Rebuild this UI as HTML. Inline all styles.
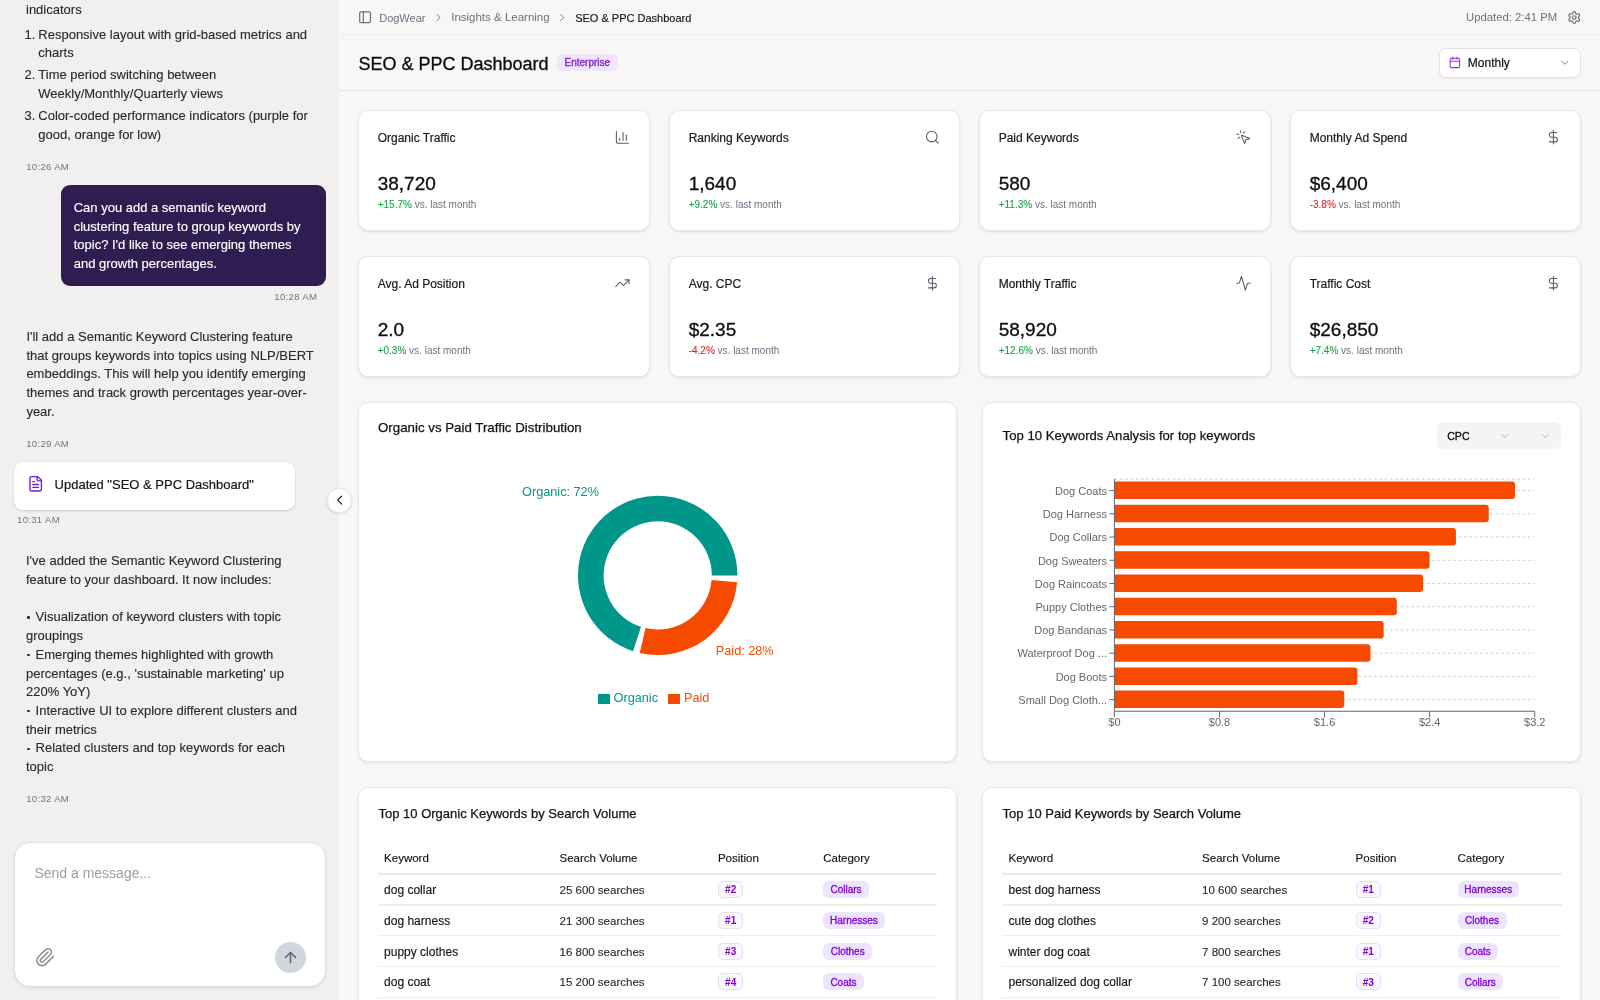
<!DOCTYPE html>
<html><head><meta charset="utf-8"><title>SEO &amp; PPC Dashboard</title>
<style>
html,body{margin:0;padding:0;width:1600px;height:1000px;overflow:hidden;background:#f8f7f5;}
body{position:relative;font-family:"Liberation Sans", sans-serif;-webkit-font-smoothing:antialiased;}
#root{position:absolute;left:0;top:0;width:1600px;height:1000px;will-change:transform;}
</style></head><body><div id="root">
<div style="position:absolute;left:0.00px;top:0.00px;width:339.20px;height:1000.00px;background:#f1f0ee;"></div>
<div style="position:absolute;top:2.75px;font-size:13px;line-height:13px;color:#2a2a2a;white-space:nowrap;-webkit-text-stroke:0.12px #2a2a2a;left:26.00px;">indicators</div>
<div style="position:absolute;top:27.75px;font-size:13px;line-height:13px;color:#2a2a2a;white-space:nowrap;-webkit-text-stroke:0.12px #2a2a2a;left:24.50px;">1.</div>
<div style="position:absolute;top:27.75px;font-size:13px;line-height:13px;color:#2a2a2a;white-space:nowrap;-webkit-text-stroke:0.12px #2a2a2a;left:38.30px;">Responsive layout with grid-based metrics and</div>
<div style="position:absolute;top:46.47px;font-size:13px;line-height:13px;color:#2a2a2a;white-space:nowrap;-webkit-text-stroke:0.12px #2a2a2a;left:38.30px;">charts</div>
<div style="position:absolute;top:68.40px;font-size:13px;line-height:13px;color:#2a2a2a;white-space:nowrap;-webkit-text-stroke:0.12px #2a2a2a;left:24.50px;">2.</div>
<div style="position:absolute;top:68.40px;font-size:13px;line-height:13px;color:#2a2a2a;white-space:nowrap;-webkit-text-stroke:0.12px #2a2a2a;left:38.30px;">Time period switching between</div>
<div style="position:absolute;top:87.12px;font-size:13px;line-height:13px;color:#2a2a2a;white-space:nowrap;-webkit-text-stroke:0.12px #2a2a2a;left:38.30px;">Weekly/Monthly/Quarterly views</div>
<div style="position:absolute;top:109.20px;font-size:13px;line-height:13px;color:#2a2a2a;white-space:nowrap;-webkit-text-stroke:0.12px #2a2a2a;left:24.50px;">3.</div>
<div style="position:absolute;top:109.20px;font-size:13px;line-height:13px;color:#2a2a2a;white-space:nowrap;-webkit-text-stroke:0.12px #2a2a2a;left:38.30px;">Color-coded performance indicators (purple for</div>
<div style="position:absolute;top:127.92px;font-size:13px;line-height:13px;color:#2a2a2a;white-space:nowrap;-webkit-text-stroke:0.12px #2a2a2a;left:38.30px;">good, orange for low)</div>
<div style="position:absolute;top:162.07px;font-size:9.6px;line-height:9.6px;color:#74747f;white-space:nowrap;letter-spacing:0.3px;left:26.20px;">10:26 AM</div>
<div style="position:absolute;left:60.60px;top:185.00px;width:265.60px;height:101.40px;background:#2f1d52;border-radius:9px;"></div>
<div style="position:absolute;top:201.00px;font-size:13px;line-height:13px;color:#ffffff;white-space:nowrap;-webkit-text-stroke:0.15px #ffffff;left:73.70px;">Can you add a semantic keyword</div>
<div style="position:absolute;top:219.72px;font-size:13px;line-height:13px;color:#ffffff;white-space:nowrap;-webkit-text-stroke:0.15px #ffffff;left:73.70px;">clustering feature to group keywords by</div>
<div style="position:absolute;top:238.44px;font-size:13px;line-height:13px;color:#ffffff;white-space:nowrap;-webkit-text-stroke:0.15px #ffffff;left:73.70px;">topic? I'd like to see emerging themes</div>
<div style="position:absolute;top:257.16px;font-size:13px;line-height:13px;color:#ffffff;white-space:nowrap;-webkit-text-stroke:0.15px #ffffff;left:73.70px;">and growth percentages.</div>
<div style="position:absolute;top:291.87px;font-size:9.6px;line-height:9.6px;color:#74747f;white-space:nowrap;letter-spacing:0.3px;right:1282.80px;">10:28 AM</div>
<div style="position:absolute;top:329.80px;font-size:13px;line-height:13px;color:#2a2a2a;white-space:nowrap;-webkit-text-stroke:0.12px #2a2a2a;left:26.40px;">I'll add a Semantic Keyword Clustering feature</div>
<div style="position:absolute;top:348.52px;font-size:13px;line-height:13px;color:#2a2a2a;white-space:nowrap;-webkit-text-stroke:0.12px #2a2a2a;left:26.40px;">that groups keywords into topics using NLP/BERT</div>
<div style="position:absolute;top:367.24px;font-size:13px;line-height:13px;color:#2a2a2a;white-space:nowrap;-webkit-text-stroke:0.12px #2a2a2a;left:26.40px;">embeddings. This will help you identify emerging</div>
<div style="position:absolute;top:385.96px;font-size:13px;line-height:13px;color:#2a2a2a;white-space:nowrap;-webkit-text-stroke:0.12px #2a2a2a;left:26.40px;">themes and track growth percentages year-over-</div>
<div style="position:absolute;top:404.68px;font-size:13px;line-height:13px;color:#2a2a2a;white-space:nowrap;-webkit-text-stroke:0.12px #2a2a2a;left:26.40px;">year.</div>
<div style="position:absolute;top:438.67px;font-size:9.6px;line-height:9.6px;color:#74747f;white-space:nowrap;letter-spacing:0.3px;left:26.20px;">10:29 AM</div>
<div style="position:absolute;left:14.00px;top:462.30px;width:281.00px;height:47.50px;background:#fff;border-radius:9px;box-shadow:0 1px 3px rgba(0,0,0,0.10),0 1px 2px rgba(0,0,0,0.06);"></div>
<svg style="position:absolute;left:27px;top:475px;transform:translate(0.10px,0.20px);" width="17.2" height="17.2" viewBox="0 0 24 24" fill="none" stroke="#6a1fd8" stroke-width="1.9" stroke-linecap="round" stroke-linejoin="round"><path d="M15 2H6a2 2 0 0 0-2 2v16a2 2 0 0 0 2 2h12a2 2 0 0 0 2-2V7Z"/><path d="M14 2v4a2 2 0 0 0 2 2h4"/><path d="M10 9H8"/><path d="M16 13H8"/><path d="M16 17H8"/></svg>
<div style="position:absolute;top:478.40px;font-size:13px;line-height:13px;color:#161616;white-space:nowrap;-webkit-text-stroke:0.2px #161616;left:54.60px;">Updated "SEO &amp; PPC Dashboard"</div>
<div style="position:absolute;top:515.17px;font-size:9.6px;line-height:9.6px;color:#74747f;white-space:nowrap;letter-spacing:0.3px;left:17.00px;">10:31 AM</div>
<div style="position:absolute;top:554.20px;font-size:13px;line-height:13px;color:#2a2a2a;white-space:nowrap;-webkit-text-stroke:0.12px #2a2a2a;left:26.00px;">I've added the Semantic Keyword Clustering</div>
<div style="position:absolute;top:572.92px;font-size:13px;line-height:13px;color:#2a2a2a;white-space:nowrap;-webkit-text-stroke:0.12px #2a2a2a;left:26.00px;">feature to your dashboard. It now includes:</div>
<div style="position:absolute;left:27.20px;top:616.46px;width:2.40px;height:2.40px;background:#2a2a2a;border-radius:50%;"></div>
<div style="position:absolute;top:610.36px;font-size:13px;line-height:13px;color:#2a2a2a;white-space:nowrap;-webkit-text-stroke:0.12px #2a2a2a;left:35.60px;">Visualization of keyword clusters with topic</div>
<div style="position:absolute;top:629.08px;font-size:13px;line-height:13px;color:#2a2a2a;white-space:nowrap;-webkit-text-stroke:0.12px #2a2a2a;left:26.00px;">groupings</div>
<div style="position:absolute;left:27.20px;top:653.90px;width:2.40px;height:2.40px;background:#2a2a2a;border-radius:50%;"></div>
<div style="position:absolute;top:647.80px;font-size:13px;line-height:13px;color:#2a2a2a;white-space:nowrap;-webkit-text-stroke:0.12px #2a2a2a;left:35.60px;">Emerging themes highlighted with growth</div>
<div style="position:absolute;top:666.52px;font-size:13px;line-height:13px;color:#2a2a2a;white-space:nowrap;-webkit-text-stroke:0.12px #2a2a2a;left:26.00px;">percentages (e.g., 'sustainable marketing' up</div>
<div style="position:absolute;top:685.24px;font-size:13px;line-height:13px;color:#2a2a2a;white-space:nowrap;-webkit-text-stroke:0.12px #2a2a2a;left:26.00px;">220% YoY)</div>
<div style="position:absolute;left:27.20px;top:710.06px;width:2.40px;height:2.40px;background:#2a2a2a;border-radius:50%;"></div>
<div style="position:absolute;top:703.96px;font-size:13px;line-height:13px;color:#2a2a2a;white-space:nowrap;-webkit-text-stroke:0.12px #2a2a2a;left:35.60px;">Interactive UI to explore different clusters and</div>
<div style="position:absolute;top:722.68px;font-size:13px;line-height:13px;color:#2a2a2a;white-space:nowrap;-webkit-text-stroke:0.12px #2a2a2a;left:26.00px;">their metrics</div>
<div style="position:absolute;left:27.20px;top:747.50px;width:2.40px;height:2.40px;background:#2a2a2a;border-radius:50%;"></div>
<div style="position:absolute;top:741.40px;font-size:13px;line-height:13px;color:#2a2a2a;white-space:nowrap;-webkit-text-stroke:0.12px #2a2a2a;left:35.60px;">Related clusters and top keywords for each</div>
<div style="position:absolute;top:760.12px;font-size:13px;line-height:13px;color:#2a2a2a;white-space:nowrap;-webkit-text-stroke:0.12px #2a2a2a;left:26.00px;">topic</div>
<div style="position:absolute;top:793.67px;font-size:9.6px;line-height:9.6px;color:#74747f;white-space:nowrap;letter-spacing:0.3px;left:26.20px;">10:32 AM</div>
<div style="position:absolute;left:14.30px;top:841.80px;width:311.40px;height:145.40px;background:#fff;border-radius:16px;box-sizing:border-box;border:1px solid #e0e0e4;box-shadow:0 1px 3px rgba(0,0,0,0.09);"></div>
<div style="position:absolute;top:865.95px;font-size:14px;line-height:14px;color:#9aa0aa;white-space:nowrap;left:34.40px;">Send a message...</div>
<svg style="position:absolute;left:35px;top:946px;transform:translate(0.15px,0.95px);" width="20.4" height="20.4" viewBox="0 0 24 24" fill="none" stroke="#8a909b" stroke-width="1.8" stroke-linecap="round" stroke-linejoin="round"><path d="m21.44 11.05-9.19 9.19a6 6 0 0 1-8.49-8.49l8.57-8.57A4 4 0 1 1 18 8.84l-8.59 8.57a2 2 0 0 1-2.83-2.83l8.49-8.48"/></svg>
<div style="position:absolute;left:275.10px;top:942.10px;width:30.80px;height:30.80px;background:#d1d5dc;border-radius:50%;"></div>
<svg style="position:absolute;left:281px;top:948px;transform:translate(0.75px,0.75px);" width="17.5" height="17.5" viewBox="0 0 24 24" fill="none" stroke="#5b6270" stroke-width="2" stroke-linecap="round" stroke-linejoin="round"><path d="m5 12 7-7 7 7"/><path d="M12 19V5"/></svg>
<div style="position:absolute;left:339.20px;top:0.00px;width:1260.80px;height:1000.00px;background:#f8f7f5;"></div>
<div style="position:absolute;left:339.20px;top:34.00px;width:1260.80px;height:1.00px;background:#efeeeb;"></div>
<div style="position:absolute;left:339.20px;top:90.00px;width:1260.80px;height:1.00px;background:#e6e5e2;"></div>
<svg style="position:absolute;left:357px;top:10px;transform:translate(0.90px,0.05px);" width="14.4" height="14.4" viewBox="0 0 24 24" fill="none" stroke="#6f6f7f" stroke-width="2" stroke-linecap="round" stroke-linejoin="round"><rect width="18" height="18" x="3" y="3" rx="2"/><path d="M9 3v18"/></svg>
<div style="position:absolute;top:12.59px;font-size:11px;line-height:11px;color:#6f6f7f;white-space:nowrap;left:379.20px;">DogWear</div>
<svg style="position:absolute;left:432px;top:11px;transform:translate(0.50px,0.50px);" width="12" height="12" viewBox="0 0 24 24" fill="none" stroke="#77778a" stroke-width="2" stroke-linecap="round" stroke-linejoin="round"><path d="m9 18 6-6-6-6"/></svg>
<div style="position:absolute;top:12.17px;font-size:11.5px;line-height:11.5px;color:#6f6f7f;white-space:nowrap;left:451.20px;">Insights &amp; Learning</div>
<svg style="position:absolute;left:556px;top:11px;transform:translate(0.20px,0.50px);" width="12" height="12" viewBox="0 0 24 24" fill="none" stroke="#77778a" stroke-width="2" stroke-linecap="round" stroke-linejoin="round"><path d="m9 18 6-6-6-6"/></svg>
<div style="position:absolute;top:12.59px;font-size:11px;line-height:11px;color:#141414;white-space:nowrap;-webkit-text-stroke:0.15px #141414;left:575.20px;">SEO &amp; PPC Dashboard</div>
<div style="position:absolute;top:12.33px;font-size:11.3px;line-height:11.3px;color:#6f6f7f;white-space:nowrap;left:1466.10px;">Updated: 2:41 PM</div>
<svg style="position:absolute;left:1567px;top:10px;transform:translate(0.10px,0.40px);" width="14.3" height="14.3" viewBox="0 0 24 24" fill="none" stroke="#6f6f7f" stroke-width="2" stroke-linecap="round" stroke-linejoin="round"><path d="M12.22 2h-.44a2 2 0 0 0-2 2v.18a2 2 0 0 1-1 1.73l-.43.25a2 2 0 0 1-2 0l-.15-.08a2 2 0 0 0-2.73.73l-.22.38a2 2 0 0 0 .73 2.73l.15.1a2 2 0 0 1 1 1.72v.51a2 2 0 0 1-1 1.74l-.15.09a2 2 0 0 0-.73 2.73l.22.38a2 2 0 0 0 2.73.73l.15-.08a2 2 0 0 1 2 0l.43.25a2 2 0 0 1 1 1.73V20a2 2 0 0 0 2 2h.44a2 2 0 0 0 2-2v-.18a2 2 0 0 1 1-1.73l.43-.25a2 2 0 0 1 2 0l.15.08a2 2 0 0 0 2.73-.73l.22-.39a2 2 0 0 0-.73-2.73l-.15-.08a2 2 0 0 1-1-1.74v-.5a2 2 0 0 1 1-1.74l.15-.09a2 2 0 0 0 .73-2.73l-.22-.38a2 2 0 0 0-2.73-.73l-.15.08a2 2 0 0 1-2 0l-.43-.25a2 2 0 0 1-1-1.73V4a2 2 0 0 0-2-2z"/><circle cx="12" cy="12" r="3"/></svg>
<div style="position:absolute;top:54.76px;font-size:18px;line-height:18px;color:#0c0c0c;white-space:nowrap;-webkit-text-stroke:0.3px #0c0c0c;left:358.50px;">SEO &amp; PPC Dashboard</div>
<div style="position:absolute;left:557.30px;top:54.20px;width:61.10px;height:16.60px;background:#efe5fd;border-radius:5px;"></div>
<div style="position:absolute;top:58.44px;font-size:10px;line-height:10px;color:#7a1fc8;white-space:nowrap;-webkit-text-stroke:0.3px #7a1fc8;left:564.50px;">Enterprise</div>
<div style="position:absolute;left:1438.70px;top:48.20px;width:142.10px;height:29.60px;background:#fff;border-radius:7px;box-sizing:border-box;border:1px solid #e6e4e1;box-shadow:0 1px 2px rgba(0,0,0,0.06);"></div>
<svg style="position:absolute;left:1448px;top:56px;transform:translate(0.60px,0.10px);" width="12.6" height="12.6" viewBox="0 0 24 24" fill="none" stroke="#9a2cf0" stroke-width="2" stroke-linecap="round" stroke-linejoin="round"><path d="M8 2v4"/><path d="M16 2v4"/><rect width="18" height="18" x="3" y="4" rx="2"/><path d="M3 10h18"/></svg>
<div style="position:absolute;top:56.84px;font-size:12px;line-height:12px;color:#0c0c0c;white-space:nowrap;-webkit-text-stroke:0.15px #0c0c0c;left:1467.80px;">Monthly</div>
<svg style="position:absolute;left:1558px;top:56px;transform:translate(0.60px,0.50px);" width="12.5" height="12.5" viewBox="0 0 24 24" fill="none" stroke="#6b7280" stroke-width="1.8" stroke-linecap="round" stroke-linejoin="round"><path d="m6 9 6 6 6-6"/></svg>
<div style="position:absolute;left:358.00px;top:110.00px;width:292.00px;height:121.00px;background:#fff;border-radius:10px;box-sizing:border-box;border:1px solid #eae8e5;box-shadow:0 1px 3px rgba(0,0,0,0.07),0 1px 2px rgba(0,0,0,0.04);"></div>
<div style="position:absolute;top:131.74px;font-size:12px;line-height:12px;color:#1a1a1a;white-space:nowrap;-webkit-text-stroke:0.2px #1a1a1a;left:377.70px;">Organic Traffic</div>
<svg style="position:absolute;left:614px;top:129px;transform:translate(0.40px,0.20px);" width="16" height="16" viewBox="0 0 24 24" fill="none" stroke="#5c5c6c" stroke-width="1.6" stroke-linecap="round" stroke-linejoin="round"><path d="M3 3v16a2 2 0 0 0 2 2h16"/><path d="M18 17V9"/><path d="M13 17V5"/><path d="M8 17v-3"/></svg>
<div style="position:absolute;top:173.92px;font-size:19px;line-height:19px;color:#0c0c0c;white-space:nowrap;-webkit-text-stroke:0.3px #0c0c0c;left:377.70px;">38,720</div>
<div style="position:absolute;left:377.70px;top:200.23px;font-size:10px;line-height:10px;white-space:nowrap;color:#6b7280;"><span style="color:#16a34a;-webkit-text-stroke:0.1px #16a34a">+15.7%</span> vs. last month</div>
<div style="position:absolute;left:669.00px;top:110.00px;width:291.00px;height:121.00px;background:#fff;border-radius:10px;box-sizing:border-box;border:1px solid #eae8e5;box-shadow:0 1px 3px rgba(0,0,0,0.07),0 1px 2px rgba(0,0,0,0.04);"></div>
<div style="position:absolute;top:131.74px;font-size:12px;line-height:12px;color:#1a1a1a;white-space:nowrap;-webkit-text-stroke:0.2px #1a1a1a;left:688.70px;">Ranking Keywords</div>
<svg style="position:absolute;left:924px;top:129px;transform:translate(0.40px,0.20px);" width="16" height="16" viewBox="0 0 24 24" fill="none" stroke="#5c5c6c" stroke-width="1.6" stroke-linecap="round" stroke-linejoin="round"><circle cx="11" cy="11" r="8"/><path d="m21 21-4.3-4.3"/></svg>
<div style="position:absolute;top:173.92px;font-size:19px;line-height:19px;color:#0c0c0c;white-space:nowrap;-webkit-text-stroke:0.3px #0c0c0c;left:688.70px;">1,640</div>
<div style="position:absolute;left:688.70px;top:200.23px;font-size:10px;line-height:10px;white-space:nowrap;color:#6b7280;"><span style="color:#16a34a;-webkit-text-stroke:0.1px #16a34a">+9.2%</span> vs. last month</div>
<div style="position:absolute;left:979.00px;top:110.00px;width:292.00px;height:121.00px;background:#fff;border-radius:10px;box-sizing:border-box;border:1px solid #eae8e5;box-shadow:0 1px 3px rgba(0,0,0,0.07),0 1px 2px rgba(0,0,0,0.04);"></div>
<div style="position:absolute;top:131.74px;font-size:12px;line-height:12px;color:#1a1a1a;white-space:nowrap;-webkit-text-stroke:0.2px #1a1a1a;left:998.70px;">Paid Keywords</div>
<svg style="position:absolute;left:1235px;top:129px;transform:translate(0.40px,0.20px);" width="16" height="16" viewBox="0 0 24 24" fill="none" stroke="#5c5c6c" stroke-width="1.6" stroke-linecap="round" stroke-linejoin="round"><path d="M14 4.1 12 6"/><path d="m5.1 8-2.9-.8"/><path d="m6 12-1.9 2"/><path d="M7.2 2.2 8 5.1"/><path d="M9.037 9.69a.498.498 0 0 1 .653-.653l11 4.5a.5.5 0 0 1-.074.949l-4.349 1.041a1 1 0 0 0-.74.739l-1.04 4.35a.5.5 0 0 1-.95.074z"/></svg>
<div style="position:absolute;top:173.92px;font-size:19px;line-height:19px;color:#0c0c0c;white-space:nowrap;-webkit-text-stroke:0.3px #0c0c0c;left:998.70px;">580</div>
<div style="position:absolute;left:998.70px;top:200.23px;font-size:10px;line-height:10px;white-space:nowrap;color:#6b7280;"><span style="color:#16a34a;-webkit-text-stroke:0.1px #16a34a">+11.3%</span> vs. last month</div>
<div style="position:absolute;left:1290.00px;top:110.00px;width:291.00px;height:121.00px;background:#fff;border-radius:10px;box-sizing:border-box;border:1px solid #eae8e5;box-shadow:0 1px 3px rgba(0,0,0,0.07),0 1px 2px rgba(0,0,0,0.04);"></div>
<div style="position:absolute;top:131.74px;font-size:12px;line-height:12px;color:#1a1a1a;white-space:nowrap;-webkit-text-stroke:0.2px #1a1a1a;left:1309.70px;">Monthly Ad Spend</div>
<svg style="position:absolute;left:1545px;top:129px;transform:translate(0.40px,0.20px);" width="16" height="16" viewBox="0 0 24 24" fill="none" stroke="#5c5c6c" stroke-width="1.6" stroke-linecap="round" stroke-linejoin="round"><line x1="12" x2="12" y1="2" y2="22"/><path d="M17 5H9.5a3.5 3.5 0 0 0 0 7h5a3.5 3.5 0 0 1 0 7H6"/></svg>
<div style="position:absolute;top:173.92px;font-size:19px;line-height:19px;color:#0c0c0c;white-space:nowrap;-webkit-text-stroke:0.3px #0c0c0c;left:1309.70px;">$6,400</div>
<div style="position:absolute;left:1309.70px;top:200.23px;font-size:10px;line-height:10px;white-space:nowrap;color:#6b7280;"><span style="color:#dc2626;-webkit-text-stroke:0.1px #dc2626">-3.8%</span> vs. last month</div>
<div style="position:absolute;left:358.00px;top:256.00px;width:292.00px;height:121.00px;background:#fff;border-radius:10px;box-sizing:border-box;border:1px solid #eae8e5;box-shadow:0 1px 3px rgba(0,0,0,0.07),0 1px 2px rgba(0,0,0,0.04);"></div>
<div style="position:absolute;top:277.74px;font-size:12px;line-height:12px;color:#1a1a1a;white-space:nowrap;-webkit-text-stroke:0.2px #1a1a1a;left:377.70px;">Avg. Ad Position</div>
<svg style="position:absolute;left:614px;top:275px;transform:translate(0.40px,0.20px);" width="16" height="16" viewBox="0 0 24 24" fill="none" stroke="#5c5c6c" stroke-width="1.6" stroke-linecap="round" stroke-linejoin="round"><polyline points="22 7 13.5 15.5 8.5 10.5 2 17"/><polyline points="16 7 22 7 22 13"/></svg>
<div style="position:absolute;top:319.92px;font-size:19px;line-height:19px;color:#0c0c0c;white-space:nowrap;-webkit-text-stroke:0.3px #0c0c0c;left:377.70px;">2.0</div>
<div style="position:absolute;left:377.70px;top:346.24px;font-size:10px;line-height:10px;white-space:nowrap;color:#6b7280;"><span style="color:#16a34a;-webkit-text-stroke:0.1px #16a34a">+0.3%</span> vs. last month</div>
<div style="position:absolute;left:669.00px;top:256.00px;width:291.00px;height:121.00px;background:#fff;border-radius:10px;box-sizing:border-box;border:1px solid #eae8e5;box-shadow:0 1px 3px rgba(0,0,0,0.07),0 1px 2px rgba(0,0,0,0.04);"></div>
<div style="position:absolute;top:277.74px;font-size:12px;line-height:12px;color:#1a1a1a;white-space:nowrap;-webkit-text-stroke:0.2px #1a1a1a;left:688.70px;">Avg. CPC</div>
<svg style="position:absolute;left:924px;top:275px;transform:translate(0.40px,0.20px);" width="16" height="16" viewBox="0 0 24 24" fill="none" stroke="#5c5c6c" stroke-width="1.6" stroke-linecap="round" stroke-linejoin="round"><line x1="12" x2="12" y1="2" y2="22"/><path d="M17 5H9.5a3.5 3.5 0 0 0 0 7h5a3.5 3.5 0 0 1 0 7H6"/></svg>
<div style="position:absolute;top:319.92px;font-size:19px;line-height:19px;color:#0c0c0c;white-space:nowrap;-webkit-text-stroke:0.3px #0c0c0c;left:688.70px;">$2.35</div>
<div style="position:absolute;left:688.70px;top:346.24px;font-size:10px;line-height:10px;white-space:nowrap;color:#6b7280;"><span style="color:#dc2626;-webkit-text-stroke:0.1px #dc2626">-4.2%</span> vs. last month</div>
<div style="position:absolute;left:979.00px;top:256.00px;width:292.00px;height:121.00px;background:#fff;border-radius:10px;box-sizing:border-box;border:1px solid #eae8e5;box-shadow:0 1px 3px rgba(0,0,0,0.07),0 1px 2px rgba(0,0,0,0.04);"></div>
<div style="position:absolute;top:277.74px;font-size:12px;line-height:12px;color:#1a1a1a;white-space:nowrap;-webkit-text-stroke:0.2px #1a1a1a;left:998.70px;">Monthly Traffic</div>
<svg style="position:absolute;left:1235px;top:275px;transform:translate(0.40px,0.20px);" width="16" height="16" viewBox="0 0 24 24" fill="none" stroke="#5c5c6c" stroke-width="1.6" stroke-linecap="round" stroke-linejoin="round"><path d="M22 12h-2.48a2 2 0 0 0-1.93 1.46l-2.35 8.36a.25.25 0 0 1-.48 0L9.24 2.18a.25.25 0 0 0-.48 0l-2.35 8.36A2 2 0 0 1 4.49 12H2"/></svg>
<div style="position:absolute;top:319.92px;font-size:19px;line-height:19px;color:#0c0c0c;white-space:nowrap;-webkit-text-stroke:0.3px #0c0c0c;left:998.70px;">58,920</div>
<div style="position:absolute;left:998.70px;top:346.24px;font-size:10px;line-height:10px;white-space:nowrap;color:#6b7280;"><span style="color:#16a34a;-webkit-text-stroke:0.1px #16a34a">+12.6%</span> vs. last month</div>
<div style="position:absolute;left:1290.00px;top:256.00px;width:291.00px;height:121.00px;background:#fff;border-radius:10px;box-sizing:border-box;border:1px solid #eae8e5;box-shadow:0 1px 3px rgba(0,0,0,0.07),0 1px 2px rgba(0,0,0,0.04);"></div>
<div style="position:absolute;top:277.74px;font-size:12px;line-height:12px;color:#1a1a1a;white-space:nowrap;-webkit-text-stroke:0.2px #1a1a1a;left:1309.70px;">Traffic Cost</div>
<svg style="position:absolute;left:1545px;top:275px;transform:translate(0.40px,0.20px);" width="16" height="16" viewBox="0 0 24 24" fill="none" stroke="#5c5c6c" stroke-width="1.6" stroke-linecap="round" stroke-linejoin="round"><line x1="12" x2="12" y1="2" y2="22"/><path d="M17 5H9.5a3.5 3.5 0 0 0 0 7h5a3.5 3.5 0 0 1 0 7H6"/></svg>
<div style="position:absolute;top:319.92px;font-size:19px;line-height:19px;color:#0c0c0c;white-space:nowrap;-webkit-text-stroke:0.3px #0c0c0c;left:1309.70px;">$26,850</div>
<div style="position:absolute;left:1309.70px;top:346.24px;font-size:10px;line-height:10px;white-space:nowrap;color:#6b7280;"><span style="color:#16a34a;-webkit-text-stroke:0.1px #16a34a">+7.4%</span> vs. last month</div>
<div style="position:absolute;left:358.00px;top:402.00px;width:599.00px;height:360.00px;background:#fff;border-radius:10px;box-sizing:border-box;border:1px solid #eae8e5;box-shadow:0 1px 3px rgba(0,0,0,0.07),0 1px 2px rgba(0,0,0,0.04);"></div>
<div style="position:absolute;top:421.24px;font-size:13.3px;line-height:13.3px;color:#141414;white-space:nowrap;-webkit-text-stroke:0.25px #141414;left:378.00px;">Organic vs Paid Traffic Distribution</div>
<div style="position:absolute;left:982.00px;top:402.00px;width:599.00px;height:360.00px;background:#fff;border-radius:10px;box-sizing:border-box;border:1px solid #eae8e5;box-shadow:0 1px 3px rgba(0,0,0,0.07),0 1px 2px rgba(0,0,0,0.04);"></div>
<div style="position:absolute;top:429.17px;font-size:13.15px;line-height:13.15px;color:#141414;white-space:nowrap;-webkit-text-stroke:0.25px #141414;left:1002.60px;">Top 10 Keywords Analysis for top keywords</div>
<svg style="position:absolute;left:0;top:0" width="1600" height="1000"><path d="M737.40 575.40A79.7 79.7 0 1 0 633.07 651.20L640.98 626.85A54.1 54.1 0 1 1 711.80 575.40Z" fill="#009689"/><path d="M639.77 653.06A79.7 79.7 0 0 0 737.10 582.35L711.59 580.12A54.1 54.1 0 0 1 645.53 628.11Z" fill="#f54a00"/></svg>
<div style="position:absolute;top:485.85px;font-size:12.7px;line-height:12.7px;color:#009689;white-space:nowrap;left:522.10px;">Organic: 72%</div>
<div style="position:absolute;top:644.95px;font-size:12.7px;line-height:12.7px;color:#f54a00;white-space:nowrap;left:715.80px;">Paid: 28%</div>
<div style="position:absolute;left:598.00px;top:694.30px;width:11.70px;height:9.70px;background:#009689;"></div>
<div style="position:absolute;top:692.15px;font-size:12.7px;line-height:12.7px;color:#009689;white-space:nowrap;left:613.60px;">Organic</div>
<div style="position:absolute;left:668.20px;top:694.30px;width:11.90px;height:9.70px;background:#f54a00;"></div>
<div style="position:absolute;top:692.15px;font-size:12.7px;line-height:12.7px;color:#f54a00;white-space:nowrap;left:684.00px;">Paid</div>
<div style="position:absolute;left:1437.20px;top:421.50px;width:123.80px;height:27.30px;background:#f3f4f6;border-radius:6px;"></div>
<div style="position:absolute;top:431.03px;font-size:10.6px;line-height:10.6px;color:#0c0c0c;white-space:nowrap;-webkit-text-stroke:0.3px #0c0c0c;left:1447.20px;">CPC</div>
<svg style="position:absolute;left:1499px;top:430px;transform:translate(0.20px,0.40px);" width="11.5" height="11.5" viewBox="0 0 24 24" fill="none" stroke="#a3a7b0" stroke-width="1.8" stroke-linecap="round" stroke-linejoin="round"><path d="m6 9 6 6 6-6"/></svg>
<svg style="position:absolute;left:1539px;top:430px;transform:translate(0.70px,0.40px);" width="11.5" height="11.5" viewBox="0 0 24 24" fill="none" stroke="#a3a7b0" stroke-width="1.8" stroke-linecap="round" stroke-linejoin="round"><path d="m6 9 6 6 6-6"/></svg>
<svg style="position:absolute;left:0;top:0" width="1600" height="1000"><line x1="1114.4" y1="479.0" x2="1534.72" y2="479.0" stroke="#cdced4" stroke-dasharray="2.7 2.6"/><line x1="1114.4" y1="490.61" x2="1534.72" y2="490.61" stroke="#cdced4" stroke-dasharray="2.7 2.6"/><line x1="1114.4" y1="513.84" x2="1534.72" y2="513.84" stroke="#cdced4" stroke-dasharray="2.7 2.6"/><line x1="1114.4" y1="537.06" x2="1534.72" y2="537.06" stroke="#cdced4" stroke-dasharray="2.7 2.6"/><line x1="1114.4" y1="560.29" x2="1534.72" y2="560.29" stroke="#cdced4" stroke-dasharray="2.7 2.6"/><line x1="1114.4" y1="583.51" x2="1534.72" y2="583.51" stroke="#cdced4" stroke-dasharray="2.7 2.6"/><line x1="1114.4" y1="606.74" x2="1534.72" y2="606.74" stroke="#cdced4" stroke-dasharray="2.7 2.6"/><line x1="1114.4" y1="629.96" x2="1534.72" y2="629.96" stroke="#cdced4" stroke-dasharray="2.7 2.6"/><line x1="1114.4" y1="653.19" x2="1534.72" y2="653.19" stroke="#cdced4" stroke-dasharray="2.7 2.6"/><line x1="1114.4" y1="676.41" x2="1534.72" y2="676.41" stroke="#cdced4" stroke-dasharray="2.7 2.6"/><line x1="1114.4" y1="699.64" x2="1534.72" y2="699.64" stroke="#cdced4" stroke-dasharray="2.7 2.6"/><path d="M1114.40 481.60H1512.02A3 3 0 0 1 1515.02 484.60V496.10A3 3 0 0 1 1512.02 499.10H1114.40Z" fill="#f54a00"/><path d="M1114.40 504.83H1485.75A3 3 0 0 1 1488.75 507.83V519.33A3 3 0 0 1 1485.75 522.33H1114.40Z" fill="#f54a00"/><path d="M1114.40 528.05H1452.91A3 3 0 0 1 1455.91 531.05V542.55A3 3 0 0 1 1452.91 545.55H1114.40Z" fill="#f54a00"/><path d="M1114.40 551.27H1426.64A3 3 0 0 1 1429.64 554.27V565.77A3 3 0 0 1 1426.64 568.77H1114.40Z" fill="#f54a00"/><path d="M1114.40 574.50H1420.07A3 3 0 0 1 1423.07 577.50V589.00A3 3 0 0 1 1420.07 592.00H1114.40Z" fill="#f54a00"/><path d="M1114.40 597.73H1393.80A3 3 0 0 1 1396.80 600.73V612.23A3 3 0 0 1 1393.80 615.23H1114.40Z" fill="#f54a00"/><path d="M1114.40 620.95H1380.67A3 3 0 0 1 1383.67 623.95V635.45A3 3 0 0 1 1380.67 638.45H1114.40Z" fill="#f54a00"/><path d="M1114.40 644.18H1367.53A3 3 0 0 1 1370.53 647.18V658.68A3 3 0 0 1 1367.53 661.68H1114.40Z" fill="#f54a00"/><path d="M1114.40 667.40H1354.40A3 3 0 0 1 1357.40 670.40V681.90A3 3 0 0 1 1354.40 684.90H1114.40Z" fill="#f54a00"/><path d="M1114.40 690.62H1341.26A3 3 0 0 1 1344.26 693.62V705.12A3 3 0 0 1 1341.26 708.12H1114.40Z" fill="#f54a00"/><line x1="1114.4" y1="479.0" x2="1114.4" y2="711.25" stroke="#666" stroke-width="1"/><line x1="1114.4" y1="711.25" x2="1534.72" y2="711.25" stroke="#666" stroke-width="1"/><line x1="1109.4" y1="490.61" x2="1114.4" y2="490.61" stroke="#666"/><line x1="1109.4" y1="513.84" x2="1114.4" y2="513.84" stroke="#666"/><line x1="1109.4" y1="537.06" x2="1114.4" y2="537.06" stroke="#666"/><line x1="1109.4" y1="560.29" x2="1114.4" y2="560.29" stroke="#666"/><line x1="1109.4" y1="583.51" x2="1114.4" y2="583.51" stroke="#666"/><line x1="1109.4" y1="606.74" x2="1114.4" y2="606.74" stroke="#666"/><line x1="1109.4" y1="629.96" x2="1114.4" y2="629.96" stroke="#666"/><line x1="1109.4" y1="653.19" x2="1114.4" y2="653.19" stroke="#666"/><line x1="1109.4" y1="676.41" x2="1114.4" y2="676.41" stroke="#666"/><line x1="1109.4" y1="699.64" x2="1114.4" y2="699.64" stroke="#666"/><line x1="1114.40" y1="711.25" x2="1114.40" y2="717.25" stroke="#666"/><line x1="1219.48" y1="711.25" x2="1219.48" y2="717.25" stroke="#666"/><line x1="1324.56" y1="711.25" x2="1324.56" y2="717.25" stroke="#666"/><line x1="1429.64" y1="711.25" x2="1429.64" y2="717.25" stroke="#666"/><line x1="1534.72" y1="711.25" x2="1534.72" y2="717.25" stroke="#666"/></svg>
<div style="position:absolute;top:485.90px;font-size:11px;line-height:11px;color:#666666;white-space:nowrap;right:493.00px;">Dog Coats</div>
<div style="position:absolute;top:509.13px;font-size:11px;line-height:11px;color:#666666;white-space:nowrap;right:493.00px;">Dog Harness</div>
<div style="position:absolute;top:532.35px;font-size:11px;line-height:11px;color:#666666;white-space:nowrap;right:493.00px;">Dog Collars</div>
<div style="position:absolute;top:555.58px;font-size:11px;line-height:11px;color:#666666;white-space:nowrap;right:493.00px;">Dog Sweaters</div>
<div style="position:absolute;top:578.80px;font-size:11px;line-height:11px;color:#666666;white-space:nowrap;right:493.00px;">Dog Raincoats</div>
<div style="position:absolute;top:602.03px;font-size:11px;line-height:11px;color:#666666;white-space:nowrap;right:493.00px;">Puppy Clothes</div>
<div style="position:absolute;top:625.25px;font-size:11px;line-height:11px;color:#666666;white-space:nowrap;right:493.00px;">Dog Bandanas</div>
<div style="position:absolute;top:648.48px;font-size:11px;line-height:11px;color:#666666;white-space:nowrap;right:493.00px;">Waterproof Dog ...</div>
<div style="position:absolute;top:671.70px;font-size:11px;line-height:11px;color:#666666;white-space:nowrap;right:493.00px;">Dog Boots</div>
<div style="position:absolute;top:694.93px;font-size:11px;line-height:11px;color:#666666;white-space:nowrap;right:493.00px;">Small Dog Cloth...</div>
<div style="position:absolute;top:717.09px;font-size:11px;line-height:11px;color:#666666;white-space:nowrap;left:1114.40px;transform:translateX(-50%);">$0</div>
<div style="position:absolute;top:717.09px;font-size:11px;line-height:11px;color:#666666;white-space:nowrap;left:1219.48px;transform:translateX(-50%);">$0.8</div>
<div style="position:absolute;top:717.09px;font-size:11px;line-height:11px;color:#666666;white-space:nowrap;left:1324.56px;transform:translateX(-50%);">$1.6</div>
<div style="position:absolute;top:717.09px;font-size:11px;line-height:11px;color:#666666;white-space:nowrap;left:1429.64px;transform:translateX(-50%);">$2.4</div>
<div style="position:absolute;top:717.09px;font-size:11px;line-height:11px;color:#666666;white-space:nowrap;left:1534.72px;transform:translateX(-50%);">$3.2</div>
<div style="position:absolute;left:358.00px;top:787.00px;width:599.00px;height:253.00px;background:#fff;border-radius:10px;box-sizing:border-box;border:1px solid #eae8e5;box-shadow:0 1px 3px rgba(0,0,0,0.07),0 1px 2px rgba(0,0,0,0.04);"></div>
<div style="position:absolute;left:982.00px;top:787.00px;width:599.00px;height:253.00px;background:#fff;border-radius:10px;box-sizing:border-box;border:1px solid #eae8e5;box-shadow:0 1px 3px rgba(0,0,0,0.07),0 1px 2px rgba(0,0,0,0.04);"></div>
<div style="position:absolute;top:806.80px;font-size:13px;line-height:13px;color:#141414;white-space:nowrap;-webkit-text-stroke:0.25px #141414;left:378.50px;">Top 10 Organic Keywords by Search Volume</div>
<div style="position:absolute;top:852.67px;font-size:11.5px;line-height:11.5px;color:#141414;white-space:nowrap;-webkit-text-stroke:0.15px #141414;left:384.10px;">Keyword</div>
<div style="position:absolute;top:852.67px;font-size:11.5px;line-height:11.5px;color:#141414;white-space:nowrap;-webkit-text-stroke:0.15px #141414;left:559.50px;">Search Volume</div>
<div style="position:absolute;top:852.67px;font-size:11.5px;line-height:11.5px;color:#141414;white-space:nowrap;-webkit-text-stroke:0.15px #141414;left:717.90px;">Position</div>
<div style="position:absolute;top:852.67px;font-size:11.5px;line-height:11.5px;color:#141414;white-space:nowrap;-webkit-text-stroke:0.15px #141414;left:823.20px;">Category</div>
<div style="position:absolute;left:378.00px;top:873.00px;width:559.30px;height:2.00px;background:#ecebea;"></div>
<div style="position:absolute;top:883.84px;font-size:12px;line-height:12px;color:#161616;white-space:nowrap;-webkit-text-stroke:0.15px #161616;left:384.10px;">dog collar</div>
<div style="position:absolute;top:884.87px;font-size:11.5px;line-height:11.5px;color:#2a2a2a;white-space:nowrap;-webkit-text-stroke:0.12px #2a2a2a;left:559.50px;">25 600 searches</div>
<div style="position:absolute;left:717.90px;top:880.80px;width:25.50px;height:17.10px;box-sizing:border-box;background:#faf7ff;border:1px solid #e6def2;border-radius:5px;"></div>
<div style="position:absolute;top:885.24px;font-size:10px;line-height:10px;color:#8200db;white-space:nowrap;font-weight:700;left:730.65px;transform:translateX(-50%);">#2</div>
<div style="position:absolute;left:823.20px;top:880.80px;width:45.60px;height:17.10px;background:#ede4fd;border-radius:6px;"></div>
<div style="position:absolute;top:885.24px;font-size:10px;line-height:10px;color:#8200db;white-space:nowrap;-webkit-text-stroke:0.3px #8200db;left:846.00px;transform:translateX(-50%);">Collars</div>
<div style="position:absolute;left:378.00px;top:904.20px;width:559.30px;height:1.40px;background:#efeeed;"></div>
<div style="position:absolute;top:914.69px;font-size:12px;line-height:12px;color:#161616;white-space:nowrap;-webkit-text-stroke:0.15px #161616;left:384.10px;">dog harness</div>
<div style="position:absolute;top:915.72px;font-size:11.5px;line-height:11.5px;color:#2a2a2a;white-space:nowrap;-webkit-text-stroke:0.12px #2a2a2a;left:559.50px;">21 300 searches</div>
<div style="position:absolute;left:717.90px;top:911.65px;width:25.50px;height:17.10px;box-sizing:border-box;background:#faf7ff;border:1px solid #e6def2;border-radius:5px;"></div>
<div style="position:absolute;top:916.09px;font-size:10px;line-height:10px;color:#8200db;white-space:nowrap;font-weight:700;left:730.65px;transform:translateX(-50%);">#1</div>
<div style="position:absolute;left:823.20px;top:911.65px;width:61.50px;height:17.10px;background:#ede4fd;border-radius:6px;"></div>
<div style="position:absolute;top:916.09px;font-size:10px;line-height:10px;color:#8200db;white-space:nowrap;-webkit-text-stroke:0.3px #8200db;left:853.95px;transform:translateX(-50%);">Harnesses</div>
<div style="position:absolute;left:378.00px;top:935.05px;width:559.30px;height:1.40px;background:#efeeed;"></div>
<div style="position:absolute;top:945.54px;font-size:12px;line-height:12px;color:#161616;white-space:nowrap;-webkit-text-stroke:0.15px #161616;left:384.10px;">puppy clothes</div>
<div style="position:absolute;top:946.57px;font-size:11.5px;line-height:11.5px;color:#2a2a2a;white-space:nowrap;-webkit-text-stroke:0.12px #2a2a2a;left:559.50px;">16 800 searches</div>
<div style="position:absolute;left:717.90px;top:942.50px;width:25.50px;height:17.10px;box-sizing:border-box;background:#faf7ff;border:1px solid #e6def2;border-radius:5px;"></div>
<div style="position:absolute;top:946.94px;font-size:10px;line-height:10px;color:#8200db;white-space:nowrap;font-weight:700;left:730.65px;transform:translateX(-50%);">#3</div>
<div style="position:absolute;left:823.20px;top:942.50px;width:49.00px;height:17.10px;background:#ede4fd;border-radius:6px;"></div>
<div style="position:absolute;top:946.94px;font-size:10px;line-height:10px;color:#8200db;white-space:nowrap;-webkit-text-stroke:0.3px #8200db;left:847.70px;transform:translateX(-50%);">Clothes</div>
<div style="position:absolute;left:378.00px;top:965.90px;width:559.30px;height:1.40px;background:#efeeed;"></div>
<div style="position:absolute;top:976.39px;font-size:12px;line-height:12px;color:#161616;white-space:nowrap;-webkit-text-stroke:0.15px #161616;left:384.10px;">dog coat</div>
<div style="position:absolute;top:977.42px;font-size:11.5px;line-height:11.5px;color:#2a2a2a;white-space:nowrap;-webkit-text-stroke:0.12px #2a2a2a;left:559.50px;">15 200 searches</div>
<div style="position:absolute;left:717.90px;top:973.35px;width:25.50px;height:17.10px;box-sizing:border-box;background:#faf7ff;border:1px solid #e6def2;border-radius:5px;"></div>
<div style="position:absolute;top:977.78px;font-size:10px;line-height:10px;color:#8200db;white-space:nowrap;font-weight:700;left:730.65px;transform:translateX(-50%);">#4</div>
<div style="position:absolute;left:823.20px;top:973.35px;width:40.50px;height:17.10px;background:#ede4fd;border-radius:6px;"></div>
<div style="position:absolute;top:977.78px;font-size:10px;line-height:10px;color:#8200db;white-space:nowrap;-webkit-text-stroke:0.3px #8200db;left:843.45px;transform:translateX(-50%);">Coats</div>
<div style="position:absolute;left:378.00px;top:996.75px;width:559.30px;height:1.40px;background:#efeeed;"></div>
<div style="position:absolute;top:806.80px;font-size:13px;line-height:13px;color:#141414;white-space:nowrap;-webkit-text-stroke:0.25px #141414;left:1002.60px;">Top 10 Paid Keywords by Search Volume</div>
<div style="position:absolute;top:852.67px;font-size:11.5px;line-height:11.5px;color:#141414;white-space:nowrap;-webkit-text-stroke:0.15px #141414;left:1008.50px;">Keyword</div>
<div style="position:absolute;top:852.67px;font-size:11.5px;line-height:11.5px;color:#141414;white-space:nowrap;-webkit-text-stroke:0.15px #141414;left:1202.10px;">Search Volume</div>
<div style="position:absolute;top:852.67px;font-size:11.5px;line-height:11.5px;color:#141414;white-space:nowrap;-webkit-text-stroke:0.15px #141414;left:1355.60px;">Position</div>
<div style="position:absolute;top:852.67px;font-size:11.5px;line-height:11.5px;color:#141414;white-space:nowrap;-webkit-text-stroke:0.15px #141414;left:1457.50px;">Category</div>
<div style="position:absolute;left:1002.00px;top:873.00px;width:559.50px;height:2.00px;background:#ecebea;"></div>
<div style="position:absolute;top:883.84px;font-size:12px;line-height:12px;color:#161616;white-space:nowrap;-webkit-text-stroke:0.15px #161616;left:1008.50px;">best dog harness</div>
<div style="position:absolute;top:884.87px;font-size:11.5px;line-height:11.5px;color:#2a2a2a;white-space:nowrap;-webkit-text-stroke:0.12px #2a2a2a;left:1202.10px;">10 600 searches</div>
<div style="position:absolute;left:1355.60px;top:880.80px;width:25.50px;height:17.10px;box-sizing:border-box;background:#faf7ff;border:1px solid #e6def2;border-radius:5px;"></div>
<div style="position:absolute;top:885.24px;font-size:10px;line-height:10px;color:#8200db;white-space:nowrap;font-weight:700;left:1368.35px;transform:translateX(-50%);">#1</div>
<div style="position:absolute;left:1457.50px;top:880.80px;width:61.50px;height:17.10px;background:#ede4fd;border-radius:6px;"></div>
<div style="position:absolute;top:885.24px;font-size:10px;line-height:10px;color:#8200db;white-space:nowrap;-webkit-text-stroke:0.3px #8200db;left:1488.25px;transform:translateX(-50%);">Harnesses</div>
<div style="position:absolute;left:1002.00px;top:904.20px;width:559.50px;height:1.40px;background:#efeeed;"></div>
<div style="position:absolute;top:914.69px;font-size:12px;line-height:12px;color:#161616;white-space:nowrap;-webkit-text-stroke:0.15px #161616;left:1008.50px;">cute dog clothes</div>
<div style="position:absolute;top:915.72px;font-size:11.5px;line-height:11.5px;color:#2a2a2a;white-space:nowrap;-webkit-text-stroke:0.12px #2a2a2a;left:1202.10px;">9 200 searches</div>
<div style="position:absolute;left:1355.60px;top:911.65px;width:25.50px;height:17.10px;box-sizing:border-box;background:#faf7ff;border:1px solid #e6def2;border-radius:5px;"></div>
<div style="position:absolute;top:916.09px;font-size:10px;line-height:10px;color:#8200db;white-space:nowrap;font-weight:700;left:1368.35px;transform:translateX(-50%);">#2</div>
<div style="position:absolute;left:1457.50px;top:911.65px;width:49.00px;height:17.10px;background:#ede4fd;border-radius:6px;"></div>
<div style="position:absolute;top:916.09px;font-size:10px;line-height:10px;color:#8200db;white-space:nowrap;-webkit-text-stroke:0.3px #8200db;left:1482.00px;transform:translateX(-50%);">Clothes</div>
<div style="position:absolute;left:1002.00px;top:935.05px;width:559.50px;height:1.40px;background:#efeeed;"></div>
<div style="position:absolute;top:945.54px;font-size:12px;line-height:12px;color:#161616;white-space:nowrap;-webkit-text-stroke:0.15px #161616;left:1008.50px;">winter dog coat</div>
<div style="position:absolute;top:946.57px;font-size:11.5px;line-height:11.5px;color:#2a2a2a;white-space:nowrap;-webkit-text-stroke:0.12px #2a2a2a;left:1202.10px;">7 800 searches</div>
<div style="position:absolute;left:1355.60px;top:942.50px;width:25.50px;height:17.10px;box-sizing:border-box;background:#faf7ff;border:1px solid #e6def2;border-radius:5px;"></div>
<div style="position:absolute;top:946.94px;font-size:10px;line-height:10px;color:#8200db;white-space:nowrap;font-weight:700;left:1368.35px;transform:translateX(-50%);">#1</div>
<div style="position:absolute;left:1457.50px;top:942.50px;width:40.50px;height:17.10px;background:#ede4fd;border-radius:6px;"></div>
<div style="position:absolute;top:946.94px;font-size:10px;line-height:10px;color:#8200db;white-space:nowrap;-webkit-text-stroke:0.3px #8200db;left:1477.75px;transform:translateX(-50%);">Coats</div>
<div style="position:absolute;left:1002.00px;top:965.90px;width:559.50px;height:1.40px;background:#efeeed;"></div>
<div style="position:absolute;top:976.39px;font-size:12px;line-height:12px;color:#161616;white-space:nowrap;-webkit-text-stroke:0.15px #161616;left:1008.50px;">personalized dog collar</div>
<div style="position:absolute;top:977.42px;font-size:11.5px;line-height:11.5px;color:#2a2a2a;white-space:nowrap;-webkit-text-stroke:0.12px #2a2a2a;left:1202.10px;">7 100 searches</div>
<div style="position:absolute;left:1355.60px;top:973.35px;width:25.50px;height:17.10px;box-sizing:border-box;background:#faf7ff;border:1px solid #e6def2;border-radius:5px;"></div>
<div style="position:absolute;top:977.78px;font-size:10px;line-height:10px;color:#8200db;white-space:nowrap;font-weight:700;left:1368.35px;transform:translateX(-50%);">#3</div>
<div style="position:absolute;left:1457.50px;top:973.35px;width:45.60px;height:17.10px;background:#ede4fd;border-radius:6px;"></div>
<div style="position:absolute;top:977.78px;font-size:10px;line-height:10px;color:#8200db;white-space:nowrap;-webkit-text-stroke:0.3px #8200db;left:1480.30px;transform:translateX(-50%);">Collars</div>
<div style="position:absolute;left:1002.00px;top:996.75px;width:559.50px;height:1.40px;background:#efeeed;"></div>
<div style="position:absolute;left:326.90px;top:487.50px;width:25.00px;height:25.00px;background:#fff;border-radius:50%;box-sizing:border-box;border:1px solid #e8e8e8;box-shadow:0 1px 3px rgba(0,0,0,0.12);"></div>
<svg style="position:absolute;left:331px;top:492px;transform:translate(0.85px,0.35px);" width="15.5" height="15.5" viewBox="0 0 24 24" fill="none" stroke="#1f1f1f" stroke-width="1.9" stroke-linecap="round" stroke-linejoin="round"><path d="m15 18-6-6 6-6"/></svg>
</div></body></html>
